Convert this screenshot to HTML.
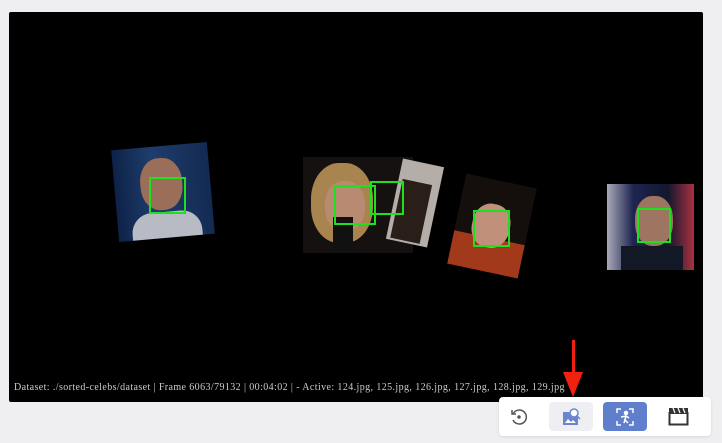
<!DOCTYPE html><html><head><style>
body{margin:0;width:722px;height:443px;background:#efeff1;position:relative;overflow:hidden;font-family:"Liberation Serif",serif}
.p{position:absolute;left:9px;top:12px;width:694px;height:390px;background:#000;border-radius:2px}
.f{position:absolute}
.g{position:absolute;border:2px solid #1fe01f;box-sizing:border-box}
.t{position:absolute;left:14px;top:382px;color:#ccc;font-size:10px;letter-spacing:0.4px;white-space:nowrap}
.tb{position:absolute;left:499px;top:397px;width:212px;height:39px;background:#fff;border-radius:4px;box-shadow:0 1px 3px rgba(0,0,0,.1)}
.b{position:absolute;top:5px;width:44px;height:29px;border-radius:4px}
</style></head><body>
<div class="p"></div>
<div class="f" style="left:115px;top:146px;width:96px;height:92px;transform:rotate(-5deg);background:linear-gradient(90deg,#0e2248,#1f3d6c 40%,#132a52);"><div style="position:absolute;left:26px;top:12px;width:42px;height:52px;border-radius:45%;background:#9a6e58"></div><div style="position:absolute;left:14px;top:66px;width:70px;height:26px;background:#b8bac4;border-radius:20px 20px 0 0"></div></div>
<div class="f" style="left:303px;top:157px;width:110px;height:96px;background:#141110"><div style="position:absolute;left:8px;top:6px;width:62px;height:80px;border-radius:45%;background:#a8844f"></div><div style="position:absolute;left:22px;top:24px;width:40px;height:50px;border-radius:45%;background:#b88a72"></div><div style="position:absolute;left:30px;top:60px;width:20px;height:36px;background:#111"></div></div>
<div class="f" style="left:394px;top:162px;width:42px;height:82px;transform:rotate(12deg);background:#b5aea8"><div style="position:absolute;left:4px;top:20px;width:30px;height:60px;background:#2a1e18"></div></div>
<div class="f" style="left:456px;top:180px;width:72px;height:92px;transform:rotate(12deg);background:#140f0c"><div style="position:absolute;left:0;top:58px;width:72px;height:34px;background:#a2391a"></div><div style="position:absolute;left:16px;top:24px;width:38px;height:44px;border-radius:45%;background:#c0907a"></div></div>
<div class="f" style="left:607px;top:184px;width:87px;height:86px;background:linear-gradient(90deg,#a9a9b8,#1e2550 30%,#13172e 70%,#a83040)"><div style="position:absolute;left:28px;top:12px;width:38px;height:50px;border-radius:45%;background:#9e7560"></div><div style="position:absolute;left:14px;top:62px;width:62px;height:24px;background:#121826"></div></div>
<div class="g" style="left:149px;top:177px;width:37px;height:37px"></div>
<div class="g" style="left:334px;top:185px;width:42px;height:40px"></div>
<div class="g" style="left:370px;top:181px;width:34px;height:34px"></div>
<div class="g" style="left:473px;top:210px;width:37px;height:37px"></div>
<div class="g" style="left:637px;top:208px;width:34px;height:35px"></div>
<div class="t">Dataset: ./sorted-celebs/dataset | Frame 6063/79132 | 00:04:02 | - Active: 124.jpg, 125.jpg, 126.jpg, 127.jpg, 128.jpg, 129.jpg</div>
<div class="tb">
<svg style="position:absolute;left:11px;top:11px" width="18" height="18" viewBox="0 0 18 18" fill="none" stroke="#555" stroke-width="1.5"><path d="M3 6A7 7 0 1 1 3 12"/><path d="M2 2v4h4"/><circle cx="9" cy="9" r="1" fill="#555"/></svg>
<div class="b" style="left:50px;background:#efeff3"><svg style="position:absolute;left:13px;top:6px" width="20" height="18" viewBox="0 0 20 18"><rect x="1" y="4" width="15" height="13" fill="#6b85cf"/><circle cx="12" cy="5" r="4" fill="#fff" stroke="#6b85cf" stroke-width="1.5"/><path d="M15 8l3 3" stroke="#6b85cf" stroke-width="1.5"/><path d="M3 15l3-4 3 3 2-2 3 3z" fill="#fff"/></svg></div>
<div class="b" style="left:104px;background:#5f7fcd"><svg style="position:absolute;left:12px;top:5px" width="20" height="20" viewBox="0 0 20 20" fill="none" stroke="#fff" stroke-width="1.5"><path d="M2 6V2h4M14 2h4v4M18 14v4h-4M6 18H2v-4"/><circle cx="11" cy="6" r="1.5" fill="#fff"/><path d="M6 10l5-1 3 2M11 9l-2 7M10 13l3 3"/></svg></div>
<svg style="position:absolute;left:169px;top:10px" width="21" height="19" viewBox="0 0 21 19"><rect x="1.5" y="6" width="18" height="11.5" fill="none" stroke="#333" stroke-width="2"/><rect x="1" y="1" width="19" height="5" fill="#333"/><path d="M5 1l2 5M10 1l2 5M15 1l2 5" stroke="#fff" stroke-width="1.2"/></svg>
</div>
<svg style="position:absolute;left:562px;top:340px" width="22" height="58" viewBox="0 0 22 58"><path d="M10 0h3v34h-3z" fill="#f2200f"/><path d="M1 32h20L11 57z" fill="#f2200f"/></svg>
</body></html>
